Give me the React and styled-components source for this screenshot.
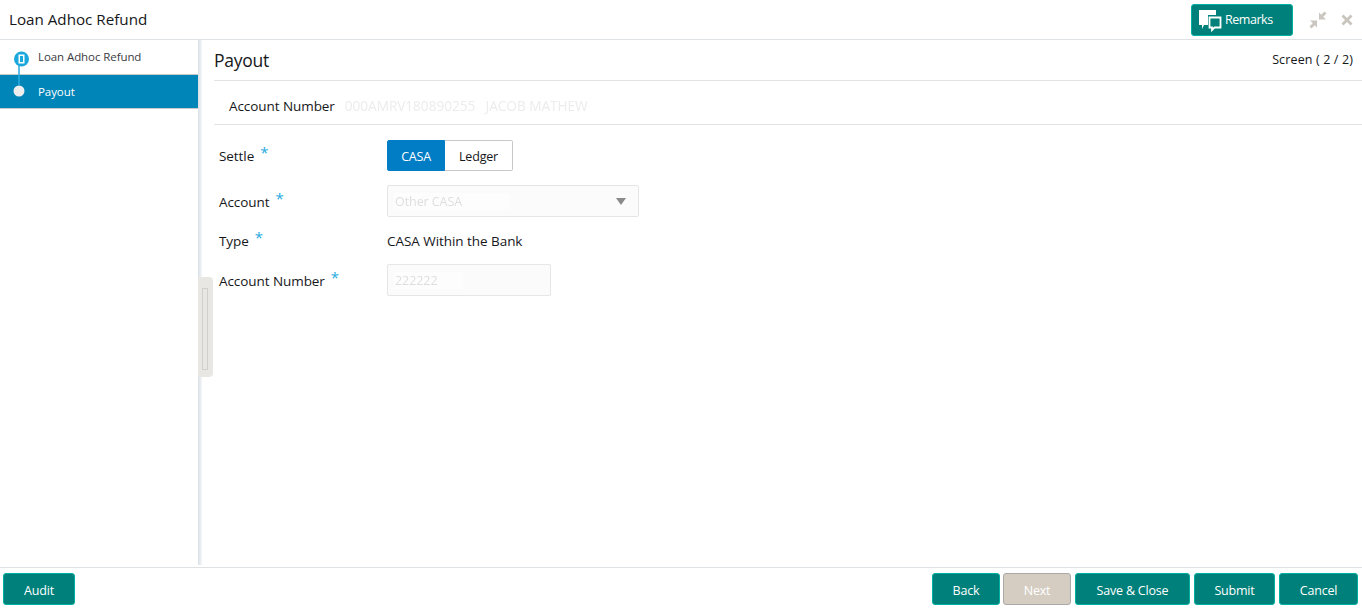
import styled, { createGlobalStyle } from "styled-components";

const GlobalStyle = createGlobalStyle`
    html, body {
        margin: 0;
        padding: 0;
        background: #fff;
    }

    body {
        font-family: "Open Sans", "Noto Sans", "Liberation Sans", sans-serif;
        color: #16171a;
    }
`;

const Page = styled.div`
    display: flex;
    flex-direction: column;
    width: 1362px;
    height: 611px;
    overflow: hidden;
`;

const Header = styled.header`
    display: flex;
    align-items: center;
    height: 39px;
    flex: none;
    padding: 0 9px 0 9px;
    border-bottom: 1px solid #dfe2e4;
`;

const AppTitle = styled.h1`
    margin: 0 0 1px;
    font-size: 15.2px;
    font-weight: 400;
`;

const HeaderActions = styled.div`
    display: flex;
    align-items: center;
    margin-left: auto;
`;

const RemarksButton = styled.button`
    display: flex;
    align-items: center;
    gap: 3px;
    width: 102px;
    height: 32px;
    padding: 0 0 0 6px;
    margin-right: 16px;
    border: 1px solid #00b0a0;
    border-radius: 3px;
    background: #00807a;
    color: #fff;
    font: 400 12.5px "Open Sans", sans-serif;
    letter-spacing: -0.45px;
`;

const WindowIcon = styled.svg`
    display: block;
    flex: none;
    margin-left: ${(p) => p.$gap || 0}px;
`;

const Body = styled.div`
    display: flex;
    flex: 1;
    min-height: 0;
    position: relative;
`;

const Sidebar = styled.nav`
    width: 198px;
    flex: none;
`;

const Step = styled.div`
    position: relative;
    display: flex;
    align-items: center;
    box-sizing: border-box;
    height: ${(p) => (p.$active ? 34 : 35)}px;
    padding: 0 0 ${(p) => (p.$active ? 0 : 1)}px 38px;
    border-bottom: 1px solid #c9c9c9;
    background: ${(p) => (p.$active ? "#0085b8" : "#fff")};
    color: ${(p) => (p.$active ? "#fff" : "#3b3b3f")};
    font-size: 11.5px;
    letter-spacing: -0.08px;
`;

const StepMarker = styled.svg`
    position: absolute;
    left: 13px;
    top: ${(p) => p.$top}px;
    z-index: 1;
`;

const Splitter = styled.div`
    width: 4px;
    flex: none;
    margin-bottom: 2px;
    background: linear-gradient(to right, #d9e0e6, #f4f6f8);
`;

const SplitHandle = styled.div`
    position: absolute;
    left: 198px;
    top: 237px;
    box-sizing: border-box;
    width: 15px;
    height: 100px;
    padding: 11px 4px 7px;
    border-radius: 0 4px 4px 0;
    background: #e8e7e3;
`;

const HandleGrip = styled.div`
    box-sizing: border-box;
    width: 6px;
    height: 100%;
    border: 1px solid #cfcfcb;
`;

const Main = styled.main`
    flex: 1;
    min-width: 0;
    padding-left: 12px;
`;

const TitleRow = styled.div`
    display: flex;
    align-items: center;
    justify-content: space-between;
    height: 40px;
    padding-right: 9px;
    border-bottom: 1px solid #e1e3e5;
    box-sizing: border-box;
    margin-top: 1px;
`;

const PageTitle = styled.h2`
    margin: 0 0 1px;
    font-size: 17.5px;
    font-weight: 400;
    letter-spacing: -0.25px;
`;

const ScreenCount = styled.span`
    font-size: 12.5px;
    letter-spacing: 0.13px;
    margin-bottom: 2px;
`;

const InfoRow = styled.div`
    display: flex;
    align-items: center;
    box-sizing: border-box;
    height: 44px;
    padding: 6px 0 0 15px;
    border-bottom: 1px solid #e1e3e5;
    font-size: 13.5px;
    letter-spacing: -0.07px;
`;

const BlurredText = styled.span`
    margin-left: 10px;
    color: #ececec;
    filter: blur(0.6px);
    font-size: 13.7px;
    white-space: pre;
`;

const Form = styled.form`
    display: grid;
    grid-template-columns: 168px auto;
    grid-template-rows: 31px 32px 19px 32px;
    row-gap: 14px;
    align-items: center;
    justify-items: start;
    padding: 15px 0 0 5px;
    font-size: 13.5px;
    letter-spacing: -0.07px;
`;

const Label = styled.label`
    display: flex;
    align-items: flex-start;
    gap: 6px;
    padding-top: ${(p) => (p.$low ? 2 : 0)}px;
`;

const Asterisk = styled.span`
    color: #29abe2;
    font-size: 15px;
    line-height: 10px;
`;

const Toggle = styled.div`
    display: flex;
    height: 31px;
`;

const ToggleOption = styled.button`
    box-sizing: border-box;
    width: ${(p) => p.$width}px;
    height: 31px;
    padding: 1px 0 0;
    border: 1px solid ${(p) => (p.$on ? "#007dc5" : "#c9c9c9")};
    border-left-width: ${(p) => (p.$on ? 1 : 0)}px;
    border-radius: ${(p) => (p.$on ? "2px 0 0 2px" : "0 2px 2px 0")};
    background: ${(p) => (p.$on ? "#007dc5" : "#fff")};
    color: ${(p) => (p.$on ? "#fff" : "#16171a")};
    font: 400 12.5px "Open Sans", sans-serif;
    letter-spacing: -0.2px;
`;

const Field = styled.div`
    display: flex;
    align-items: center;
    justify-content: space-between;
    box-sizing: border-box;
    width: ${(p) => p.$width}px;
    height: 32px;
    padding: 0 12px 0 6px;
    border: 1px solid #e6e6e6;
    border-radius: 2px;
    background: #fbfbfb;
`;

const FieldValue = styled.span`
    width: ${(p) => p.$width}px;
    padding-left: 1px;
    background: #fdfdfd;
    color: #dedede;
    filter: blur(0.5px);
    font-size: 12.5px;
`;

const Caret = styled.span`
    width: 0;
    height: 0;
    border-left: 5px solid transparent;
    border-right: 5px solid transparent;
    border-top: 7px solid #8a8a8a;
`;

const PlainValue = styled.span`
    font-size: 13.5px;
    letter-spacing: -0.05px;
`;

const Footer = styled.footer`
    display: flex;
    align-items: flex-start;
    gap: 4px;
    flex: none;
    height: 44px;
    box-sizing: border-box;
    padding: 5px 4px 0 3px;
    border-top: 1px solid #dfe2e4;
`;

const FooterSpacer = styled.div`
    flex: 1;
`;

const ActionButton = styled.button`
    box-sizing: border-box;
    width: ${(p) => p.$width}px;
    height: 32px;
    padding: 2px 0 0;
    border: 1px solid ${(p) => (p.$disabled ? "#a9a9a9" : "#00b0a0")};
    border-radius: 3px;
    margin-left: ${(p) => (p.$disabled ? -1 : 0)}px;
    background: ${(p) => (p.$disabled ? "#d5cdc2" : "#00807a")};
    color: #fff;
    font: 400 12.5px "Open Sans", sans-serif;
    letter-spacing: -0.2px;
`;

function RemarksIcon() {
    return (
        <svg width="24" height="24" viewBox="0 0 24 24">
            <path d="M1 2h17v5h-8v10H6l-2 4v-4H1z" fill="#fff" />
            <path d="M11.500 9.500h11v10h-6l-2.500 2.500v-2.500h-2.500z" fill="none" stroke="#fff" strokeWidth="1.800" />
        </svg>
    );
}

function ShrinkIcon() {
    return (
        <WindowIcon width="18" height="18" viewBox="0 0 18 18">
            <path d="M10 1.500v7h7z M1 9.500h7v7z" fill="#cbc7c0" />
            <path d="M12.500 5.500l4-4M5.500 12.500l-4 4" stroke="#cbc7c0" strokeWidth="3" fill="none" />
        </WindowIcon>
    );
}

function CloseIcon() {
    return (
        <WindowIcon $gap={14} width="12" height="12" viewBox="0 0 12 12">
            <path d="M1.500 1.500l9 9m0-9l-9 9" stroke="#c9c5be" strokeWidth="2.800" fill="none" />
        </WindowIcon>
    );
}

function App() {
    return (
        <Page>
            <GlobalStyle />
            <Header>
                <AppTitle>Loan Adhoc Refund</AppTitle>
                <HeaderActions>
                    <RemarksButton type="button">
                        <RemarksIcon />
                        Remarks
                    </RemarksButton>
                    <ShrinkIcon />
                    <CloseIcon />
                </HeaderActions>
            </Header>

            <Body>
                <Sidebar>
                    <Step>
                        <StepMarker $top={11} width="18" height="34" viewBox="0 0 18 34">
                            <path d="M6 14v22" stroke="#29abe2" strokeWidth="1.500" />
                            <circle cx="8.500" cy="8" r="7.500" fill="#1ba8dc" />
                            <rect x="5.500" y="3.500" width="6" height="9" fill="#fff" />
                            <rect x="7" y="5" width="3" height="6" fill="#1ba8dc" />
                        </StepMarker>
                        Loan Adhoc Refund
                    </Step>
                    <Step $active>
                        <StepMarker $top={10} width="12" height="12" viewBox="0 0 12 12">
                            <circle cx="6" cy="6" r="5.500" fill="#eeeeee" />
                        </StepMarker>
                        Payout
                    </Step>
                </Sidebar>

                <Splitter />
                <SplitHandle>
                    <HandleGrip />
                </SplitHandle>

                <Main>
                    <TitleRow>
                        <PageTitle>Payout</PageTitle>
                        <ScreenCount>Screen ( 2 / 2)</ScreenCount>
                    </TitleRow>
                    <InfoRow>
                        Account Number
                        <BlurredText>000AMRV180890255   JACOB MATHEW</BlurredText>
                    </InfoRow>
                    <Form>
                        <Label>Settle <Asterisk>*</Asterisk></Label>
                        <Toggle>
                            <ToggleOption type="button" $on $width={58}>CASA</ToggleOption>
                            <ToggleOption type="button" $width={68}>Ledger</ToggleOption>
                        </Toggle>

                        <Label $low>Account <Asterisk>*</Asterisk></Label>
                        <Field $width={252}>
                            <FieldValue $width={115}>Other CASA</FieldValue>
                            <Caret />
                        </Field>

                        <Label>Type <Asterisk>*</Asterisk></Label>
                        <PlainValue>CASA Within the Bank</PlainValue>

                        <Label $low>Account Number <Asterisk>*</Asterisk></Label>
                        <Field $width={164}>
                            <FieldValue $width={68}>222222</FieldValue>
                        </Field>
                    </Form>
                </Main>
            </Body>

            <Footer>
                <ActionButton type="button" $width={72}>Audit</ActionButton>
                <FooterSpacer />
                <ActionButton type="button" $width={68}>Back</ActionButton>
                <ActionButton type="button" $width={68} $disabled>Next</ActionButton>
                <ActionButton type="button" $width={115}>Save &amp; Close</ActionButton>
                <ActionButton type="button" $width={81}>Submit</ActionButton>
                <ActionButton type="button" $width={79}>Cancel</ActionButton>
            </Footer>
        </Page>
    );
}

export default App;
